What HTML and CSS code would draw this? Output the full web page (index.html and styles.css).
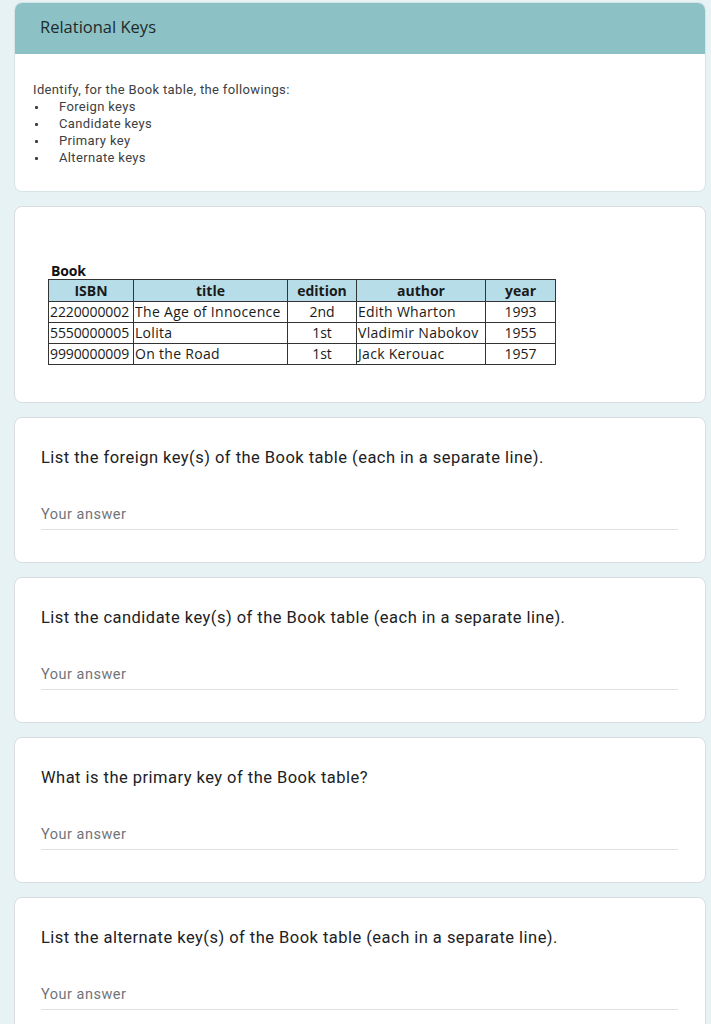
FILE: index.html
```html
<!DOCTYPE html>
<html>
<head>
<meta charset="utf-8">
<link rel="stylesheet" href="styles.css">
</head>
<body>
<div class="page">
  <section class="card intro">
    <div class="intro-head">Relational Keys</div>
    <div class="intro-body">
      <p class="lead">Identify, for the Book table, the followings:</p>
      <ul class="bullets">
        <li>Foreign keys</li>
        <li>Candidate keys</li>
        <li>Primary key</li>
        <li>Alternate keys</li>
      </ul>
    </div>
  </section>

  <section class="card table-card">
    <div class="table-wrap">
      <div class="table-label">Book</div>
      <table class="book">
        <colgroup>
          <col class="c-isbn"><col class="c-title"><col class="c-edition"><col class="c-author"><col class="c-year">
        </colgroup>
        <thead>
          <tr><th>ISBN</th><th>title</th><th>edition</th><th>author</th><th>year</th></tr>
        </thead>
        <tbody>
          <tr><td class="num">2220000002</td><td>The Age of Innocence</td><td class="ctr">2nd</td><td>Edith Wharton</td><td class="ctr">1993</td></tr>
          <tr><td class="num">5550000005</td><td>Lolita</td><td class="ctr">1st</td><td>Vladimir Nabokov</td><td class="ctr">1955</td></tr>
          <tr><td class="num">9990000009</td><td>On the Road</td><td class="ctr">1st</td><td>Jack Kerouac</td><td class="ctr">1957</td></tr>
        </tbody>
      </table>
    </div>
  </section>

  <section class="card question">
    <div class="q-title">List the foreign key(s) of the Book table (each in a separate line).</div>
    <div class="answer">Your answer</div>
  </section>

  <section class="card question">
    <div class="q-title">List the candidate key(s) of the Book table (each in a separate line).</div>
    <div class="answer">Your answer</div>
  </section>

  <section class="card question">
    <div class="q-title">What is the primary key of the Book table?</div>
    <div class="answer">Your answer</div>
  </section>

  <section class="card question">
    <div class="q-title">List the alternate key(s) of the Book table (each in a separate line).</div>
    <div class="answer">Your answer</div>
  </section>
</div>
</body>
</html>
```

FILE: styles.css
```css
html, body {
  margin: 0;
  padding: 0;
  background: #e6f2f3;
}
body {
  font-family: Roboto, "Liberation Sans", Arial, sans-serif;
  color: #202124;
}
.page {
  display: flex;
  flex-direction: column;
  gap: 14px;
  padding: 2px 5px 20px 14px;
}
.card {
  background: #ffffff;
  border: 1px solid #dadce0;
  border-radius: 8px;
  overflow: hidden;
}
.intro {
  height: 190px;
  box-sizing: border-box;
  border-color: #d6e4e6;
}
.intro-head {
  background: #8cc2c6;
  height: 51px;
  box-sizing: border-box;
  padding: 12px 0 0 25px;
  font-family: "Open Sans", Roboto, sans-serif;
  font-size: 16.5px;
  color: #1f2a2b;
}
.intro-body {
  padding: 27px 0 0 18px;
  font-size: 13px;
  letter-spacing: 0.35px;
  line-height: 17px;
  color: #3c4043;
}
.lead {
  margin: 0;
}
.bullets {
  list-style: none;
  margin: 0;
  padding: 0;
}
.bullets li {
  position: relative;
  padding-left: 26px;
}
.bullets li::before {
  content: "";
  position: absolute;
  left: 2px;
  top: 8px;
  width: 3px;
  height: 3px;
  background: #3c4043;
  border-radius: 1px;
}
.table-card {
  height: 197px;
  box-sizing: border-box;
}
.table-wrap {
  padding: 55px 0 0 33px;
}
.table-label {
  font-family: "Open Sans", "Liberation Sans", sans-serif;
  font-weight: 700;
  font-size: 14px;
  line-height: 17px;
  letter-spacing: -0.2px;
  color: #111;
  padding-left: 3px;
}
.book {
  border-collapse: collapse;
  font-family: "Open Sans", "Liberation Sans", sans-serif;
  font-size: 14px;
  color: #1a1a1a;
  table-layout: fixed;
  width: 507px;
  border: 1.5px solid #222;
}
.c-isbn { width: 85px; }
.c-title { width: 154px; }
.c-edition { width: 69px; }
.c-author { width: 129px; }
.c-year { width: 70px; }
.book th, .book td {
  border: 1px solid #333;
  padding: 0 1px;
  height: 20px;
  line-height: 18px;
  white-space: nowrap;
  overflow: hidden;
  letter-spacing: 0.3px;
}
.book td.num {
  letter-spacing: -0.1px;
}
.book th {
  background: #b7dde8;
  font-weight: 700;
  text-align: center;
  height: 21px;
  letter-spacing: 0;
}
.book td.ctr {
  text-align: center;
  letter-spacing: 0;
}
.question {
  height: 146px;
  box-sizing: border-box;
  padding: 28px 27px 0 26px;
}
.q-title {
  font-size: 16.5px;
  line-height: 24px;
  letter-spacing: 0.47px;
  color: #202124;
}
.answer {
  margin-top: 35px;
  font-size: 14.5px;
  letter-spacing: 0.5px;
  line-height: 20px;
  color: #70757a;
  padding-bottom: 4px;
  border-bottom: 1px solid #e0e0e0;
}
```
